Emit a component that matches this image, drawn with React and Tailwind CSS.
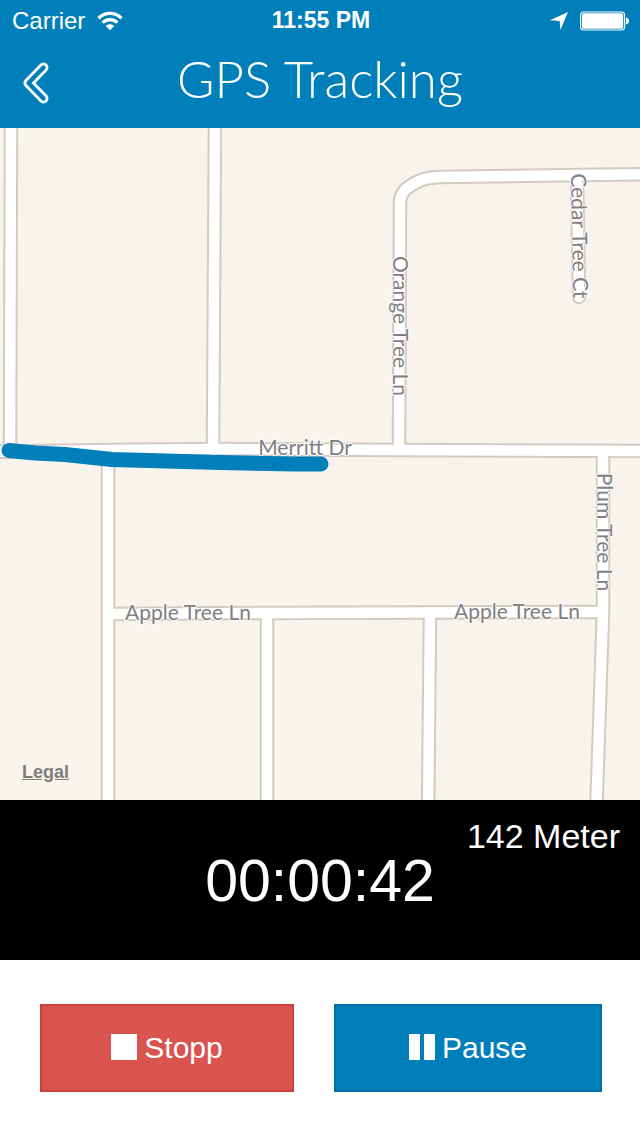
const ROADS = [
  'M11 -10 L10 324',
  'M215 -10 L213 322',
  'M-10 324 L110 322 L213 321 L399 322 L650 323',
  'M399 322 L400 74 Q400 67 406 61 Q420 49 440 49 L650 46',
  'M577 47 L579 169',
  'M603 323 L603 484 L596 690',
  'M108 324 L108 690',
  'M108 486 L270 485 L602 484',
  'M267 485 L267 690',
  'M430 485 L428 690',
];

const LABELS = [
  { text: 'Merritt Dr', x: 305, y: 327 },
  { text: 'Apple Tree Ln', x: 188, y: 492 },
  { text: 'Apple Tree Ln', x: 517, y: 491 },
  { text: 'Orange Tree Ln', x: 393, y: 198, rotate: 90 },
  { text: 'Cedar Tree Ct', x: 572, y: 108, rotate: 89 },
  { text: 'Plum Tree Ln', x: 597, y: 404, rotate: 90 },
];

function WifiIcon() {
  return (
    <svg width="26" height="20" viewBox="0 0 26 20" fill="none" stroke="white" aria-hidden="true">
      <path d="M1.5 7.2 C8 .8 18 .8 24.5 7.2" strokeWidth="3.4" />
      <path d="M5.6 11.6 C9.8 7.6 16.2 7.6 20.4 11.6" strokeWidth="3.2" />
      <path d="M8.7 15 C11.2 12.7 14.8 12.7 17.3 15 L13 19.2 Z" fill="white" stroke="none" />
    </svg>
  );
}

function LocationIcon() {
  return (
    <svg width="18" height="18" viewBox="0 0 18 18" fill="white" aria-hidden="true">
      <path d="M18 0 L0 8.3 L9.6 8.9 L10.4 18 Z" />
    </svg>
  );
}

function BatteryIcon() {
  return (
    <svg width="50" height="20" viewBox="0 0 50 20" aria-hidden="true">
      <rect x=".6" y="1" width="44" height="18" rx="3" fill="none" stroke="white" strokeWidth="1.1" />
      <rect x="2" y="2.3" width="41.2" height="15.4" rx="1.8" fill="white" />
      <path d="M46 6.5 C50 7 50 13 46 13.5 Z" fill="white" />
    </svg>
  );
}

function BackIcon() {
  return (
    <svg width="26" height="42" viewBox="0 0 26 42" fill="none" strokeLinecap="round" strokeLinejoin="round" aria-hidden="true">
      <path d="M20.5 5.5 L5.5 21 L20.5 36.5" stroke="white" strokeWidth="10" />
      <path d="M20.5 5.5 L5.5 21 L20.5 36.5" stroke="#007fba" strokeWidth="4.4" />
    </svg>
  );
}

function StopIcon() {
  return (
    <svg width="26" height="26" viewBox="0 0 26 26" fill="white" aria-hidden="true">
      <rect width="26" height="26" rx="1" />
    </svg>
  );
}

function PauseIcon() {
  return (
    <svg width="26" height="26" viewBox="0 0 26 26" fill="white" aria-hidden="true">
      <rect width="11" height="26" rx="1" />
      <rect x="15" width="11" height="26" rx="1" />
    </svg>
  );
}

function StatusBar() {
  return (
    <div className="grid h-10 grid-cols-[1fr_auto_1fr] items-center pt-px pr-[10px] pl-3">
      <div className="flex items-center gap-3 text-2xl">
        <span>Carrier</span>
        <WifiIcon />
      </div>
      <span className="text-[23px] font-bold">11:55 PM</span>
      <div className="flex items-center justify-end gap-3">
        <LocationIcon />
        <BatteryIcon />
      </div>
    </div>
  );
}

function TrackMap() {
  return (
    <section className="relative bg-[#f8f4ed]">
      <svg viewBox="0 0 640 672" className="block h-auto w-full" role="img" aria-label="Map">
        <g fill="none" stroke="#d3cac0" strokeWidth="14.5" strokeLinecap="round" strokeLinejoin="round">
          {ROADS.map((d) => (
            <path key={d} d={d} />
          ))}
        </g>
        <g fill="none" stroke="white" strokeWidth="10.5" strokeLinecap="round" strokeLinejoin="round">
          {ROADS.map((d) => (
            <path key={d} d={d} />
          ))}
        </g>
        <g
          className="font-['Lato',sans-serif] text-[21px]"
          fill="#808083"
          stroke="#fdfcfa"
          strokeWidth="2"
          strokeLinejoin="round"
          paintOrder="stroke"
          textAnchor="middle"
        >
          {LABELS.map(({ text, x, y, rotate = 0 }) => (
            <text key={`${text}-${x}`} transform={`translate(${x} ${y}) rotate(${rotate})`}>
              {text}
            </text>
          ))}
        </g>
        <path
          d="M9 322.5 L35 325 L65 326.5 L112 331.5 L220 334.5 L295 336 L321 336"
          fill="none"
          stroke="#007fba"
          strokeWidth="15"
          strokeLinecap="round"
          strokeLinejoin="round"
        />
      </svg>
      <a href="#legal" className="absolute bottom-4 left-[22px] text-lg leading-6 font-bold text-[#807d79] underline">
        Legal
      </a>
    </section>
  );
}

export default function App() {
  return (
    <div className="min-h-screen bg-white font-['Liberation_Sans',Arial,sans-serif] text-white">
      <header className="bg-[#007fba]">
        <StatusBar />
        <div className="grid h-[88px] grid-cols-[1fr_auto_1fr] items-center px-[23px] pb-[3px]">
          <button type="button" aria-label="Back" className="justify-self-start">
            <BackIcon />
          </button>
          <h1 className="pb-2 font-['Lato',sans-serif] text-[51px] leading-[60px] font-light">GPS Tracking</h1>
        </div>
      </header>

      <TrackMap />

      <section className="h-40 bg-black pt-4">
        <p className="px-5 text-right text-[34px] leading-10">142 Meter</p>
        <p className="text-center text-[59px] leading-[50px]">00:00:42</p>
      </section>

      <div className="grid grid-cols-[254fr_268fr] gap-10 py-11 pr-[38px] pl-10 text-[30px]">
        <button type="button" className="flex h-[88px] items-center justify-center gap-[7px] border-2 border-[#cb413d] bg-[#d9534f] pb-[2px]">
          <StopIcon />
          Stopp
        </button>
        <button type="button" className="flex h-[88px] items-center justify-center gap-[7px] border-2 border-[#006fa5] bg-[#007fba] pb-[2px]">
          <PauseIcon />
          Pause
        </button>
      </div>
    </div>
  );
}
